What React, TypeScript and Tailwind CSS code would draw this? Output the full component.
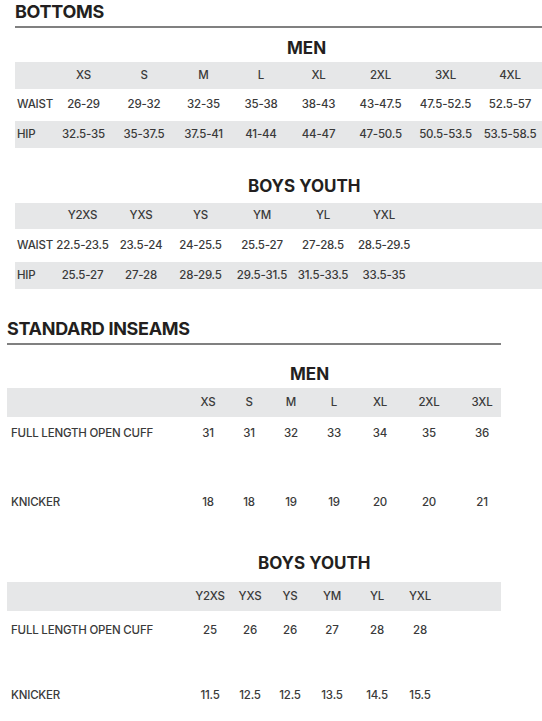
import React from "react";

const cellText = "text-[11.5px] tracking-[-0.2px] font-medium text-[#3a3a3a] whitespace-nowrap";

type Row = { label: string; values: string[]; band?: boolean; h: string; mt?: string };

function T1Row({ r }: { r: Row }) {
  return (
    <div className={`grid grid-cols-[38px_61px_60px_59px_56px_59px_65px_65px_64px] items-center ${r.h} ${r.mt ?? ""} ${r.band ? "bg-[#e6e7e8]" : ""}`}>
      <div className={`${cellText} pl-[2px]`}>{r.label}</div>
      {r.values.map((v, i) => (
        <div key={i} className={`${cellText} text-center`}>{v}</div>
      ))}
    </div>
  );
}

function T2Row({ r }: { r: Row }) {
  return (
    <div className={`grid grid-cols-[38px_59px_58px_61px_62px_60px_62px_1fr] items-center ${r.h} ${r.mt ?? ""} ${r.band ? "bg-[#e6e7e8]" : ""}`}>
      <div className={`${cellText} pl-[2px]`}>{r.label}</div>
      {r.values.map((v, i) => (
        <div key={i} className={`${cellText} text-center`}>{v}</div>
      ))}
      <div />
    </div>
  );
}

function T3Row({ r }: { r: Row }) {
  return (
    <div className={`grid grid-cols-[181px_40px_42px_42px_44px_48px_50px_47px] items-center ${r.h} ${r.mt ?? ""} ${r.band ? "bg-[#e6e7e8]" : ""}`}>
      <div className={`${cellText} pl-[4px]`}>{r.label}</div>
      {r.values.map((v, i) => (
        <div key={i} className={`${cellText} text-center ${i === 6 ? "pl-[9px]" : ""}`}>{v}</div>
      ))}
    </div>
  );
}

function T4Row({ r }: { r: Row }) {
  return (
    <div className={`grid grid-cols-[183px_40px_40px_40px_44px_46px_40px_1fr] items-center ${r.h} ${r.mt ?? ""} ${r.band ? "bg-[#e6e7e8]" : ""}`}>
      <div className={`${cellText} pl-[4px]`}>{r.label}</div>
      {r.values.map((v, i) => (
        <div key={i} className={`${cellText} text-center`}>{v}</div>
      ))}
      <div />
    </div>
  );
}

const h1 = "text-[18px] leading-none font-bold tracking-[-0.3px] text-[#231f20]";
const h2 = "text-[17px] leading-none font-bold text-[#231f20]";

export default function App() {
  return (
    <div className="w-[542px] h-[721px] bg-white overflow-hidden pt-[3px]" style={{ fontFamily: "Inter, 'Liberation Sans', sans-serif" }}>
      {/* BOTTOMS */}
      <div className="pl-[15px]">
        <div className={h1}>BOTTOMS</div>
        <div className="mt-[5px] h-[2px] bg-[#808080]" />
        <div className={`${h2} mt-[12px] pl-[272px]`}>MEN</div>
        <div className="mt-[5px]">
          <T1Row r={{ label: "", values: ["XS", "S", "M", "L", "XL", "2XL", "3XL", "4XL"], band: true, h: "h-[27px]" }} />
          <T1Row r={{ label: "WAIST", values: ["26-29", "29-32", "32-35", "35-38", "38-43", "43-47.5", "47.5-52.5", "52.5-57"], h: "h-[32px]" }} />
          <T1Row r={{ label: "HIP", values: ["32.5-35", "35-37.5", "37.5-41", "41-44", "44-47", "47-50.5", "50.5-53.5", "53.5-58.5"], band: true, h: "h-[27px]" }} />
        </div>
        <div className={`${h2} mt-[30px] pl-[233px]`}>BOYS YOUTH</div>
        <div className="mt-[8px]">
          <T2Row r={{ label: "", values: ["Y2XS", "YXS", "YS", "YM", "YL", "YXL"], band: true, h: "h-[26px]" }} />
          <T2Row r={{ label: "WAIST", values: ["22.5-23.5", "23.5-24", "24-25.5", "25.5-27", "27-28.5", "28.5-29.5"], h: "h-[33px]" }} />
          <T2Row r={{ label: "HIP", values: ["25.5-27", "27-28", "28-29.5", "29.5-31.5", "31.5-33.5", "33.5-35"], band: true, h: "h-[27px]" }} />
        </div>
      </div>

      {/* STANDARD INSEAMS */}
      <div className="pl-[7px] w-[501px] mt-[31px]">
        <div className={h1}>STANDARD INSEAMS</div>
        <div className="mt-[5px] h-[2px] bg-[#808080]" />
        <div className={`${h2} mt-[21px] pl-[283px]`}>MEN</div>
        <div className="mt-[5px]">
          <T3Row r={{ label: "", values: ["XS", "S", "M", "L", "XL", "2XL", "3XL"], band: true, h: "h-[29px]" }} />
          <T3Row r={{ label: "FULL LENGTH OPEN CUFF", values: ["31", "31", "32", "33", "34", "35", "36"], h: "h-[33px]" }} />
          <T3Row r={{ label: "KNICKER", values: ["18", "18", "19", "19", "20", "20", "21"], h: "h-[32px]", mt: "mt-[37px]" }} />
        </div>
        <div className={`${h2} mt-[36px] pl-[251px]`}>BOYS YOUTH</div>
        <div className="mt-[10px]">
          <T4Row r={{ label: "", values: ["Y2XS", "YXS", "YS", "YM", "YL", "YXL"], band: true, h: "h-[29px]" }} />
          <T4Row r={{ label: "FULL LENGTH OPEN CUFF", values: ["25", "26", "26", "27", "28", "28"], h: "h-[39px]" }} />
          <T4Row r={{ label: "KNICKER", values: ["11.5", "12.5", "12.5", "13.5", "14.5", "15.5"], h: "h-[32px]", mt: "mt-[30px]" }} />
        </div>
      </div>
    </div>
  );
}
